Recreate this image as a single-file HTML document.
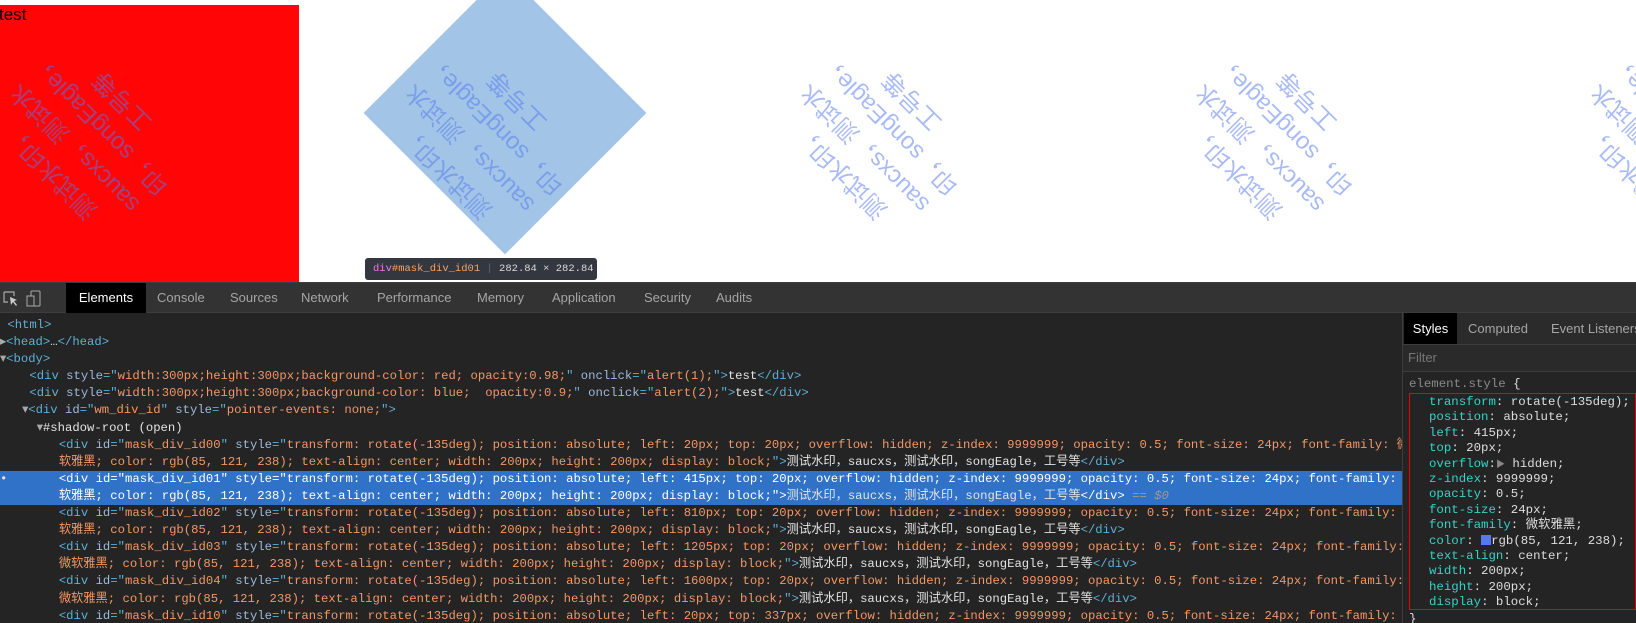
<!DOCTYPE html>
<html><head><meta charset="utf-8"><style>
*{margin:0;padding:0;box-sizing:border-box}
html,body{width:1636px;height:623px;overflow:hidden}
body{background:#fff;position:relative;font-family:"Liberation Sans","Noto Sans CJK SC",sans-serif}
.red{position:absolute;left:-1px;top:5px;width:300px;height:300px;background:#ff0505;font-size:17px;color:#000;line-height:20px}
.hl{position:absolute;left:405px;top:13px;width:200px;height:200px;background:#a1c4e7;transform:rotate(-135deg)}
.wm{position:absolute;top:13px;width:200px;height:200px;transform:rotate(-135deg);overflow:hidden;opacity:.5;font-size:24px;color:rgb(85,121,238);text-align:center;font-family:"Liberation Sans","Noto Sans CJK SC",sans-serif;line-height:1.4}
.tip{position:absolute;left:365px;top:258px;height:22px;width:232px;background:#333740;border-radius:3px;color:#d9d9d9;font:10.5px "Liberation Mono","Noto Sans CJK SC",monospace;line-height:22px;padding-left:8px;white-space:pre;overflow:hidden}
.tip:before{content:"";position:absolute;left:12px;top:-8px;border:8px solid transparent;border-top:0;border-bottom:8px solid #333740}
.dt{position:absolute;left:0;top:282px;width:1636px;height:341px;background:#242424;border-top:1px solid #3d3d3d;overflow:hidden}
.tabs{position:absolute;left:0;top:0;width:1636px;height:30px;background:#333;border-bottom:1px solid #3d3d3d;font-size:13px;color:#a5a5a5}
.tabs span{position:absolute;top:0;line-height:30px}
.code{position:absolute;left:0;top:34px;width:1402px;height:310px;overflow:hidden;font:12.25px "Liberation Mono","Noto Sans CJK SC",monospace;color:#dcdcdc}
.l{height:17.1px;line-height:17.1px;white-space:pre;overflow:hidden}
.t{color:#5db0d7}.a{color:#9bbbdc}.v{color:#f29766}.w{color:#e3e3e3}
.sel{background:#2f72c7}
.sel .t,.sel .a,.sel .v{color:#fff}
.side{position:absolute;left:1402px;top:30px;width:234px;height:311px;background:#242424;border-left:1px solid #3d3d3d}
.st{height:32px;border-bottom:1px solid #3d3d3d;font-size:13px;color:#a5a5a5;position:relative;background:#2b2b2b}
.st span{position:absolute;top:0;line-height:31px}
.flt{height:27px;background:#2a2a2a;border-bottom:1px solid #3d3d3d;color:#777;font-size:13px;padding:5px 0 0 5px}
.css{font:12.4px "Liberation Mono","Noto Sans CJK SC",monospace;color:#dedede}
.css div{height:15.4px;line-height:15.4px;white-space:pre}
.p{color:#35d4c7}
</style></head><body>
<div class="red">test</div>
<div class="hl"></div>
<div class="wm" style="left:10px">测试水印，saucxs，测试水印，songEagle，工号等</div>
<div class="wm" style="left:405px">测试水印，saucxs，测试水印，songEagle，工号等</div>
<div class="wm" style="left:800px">测试水印，saucxs，测试水印，songEagle，工号等</div>
<div class="wm" style="left:1195px">测试水印，saucxs，测试水印，songEagle，工号等</div>
<div class="wm" style="left:1590px">测试水印，saucxs，测试水印，songEagle，工号等</div>
<div class="tip"><span style="color:#ee78e6">div</span><span style="color:#f3a56a">#mask_div_id01</span> <span style="color:#666">|</span> 282.84 × 282.84</div>

<div class="dt">
<div class="tabs">
<svg style="position:absolute;left:3px;top:7px" width="40" height="17" viewBox="0 0 40 17"><path d="M1 2h10v4M1 2v10h4" stroke="#aaa" fill="none" stroke-width="1.2"/><path d="M7 7l7 3-3 1 3 4-1 1-3-4-2 3z" fill="#ccc"/><rect x="28" y="1" width="9" height="15" rx="1" stroke="#aaa" fill="none"/><rect x="24" y="6" width="7" height="10" stroke="#aaa" fill="#333"/></svg>
<span style="left:66px;width:80px;background:#000;color:#fff;text-align:center">Elements</span>
<span style="left:157px">Console</span><span style="left:230px">Sources</span><span style="left:301px">Network</span><span style="left:377px">Performance</span><span style="left:477px">Memory</span><span style="left:552px">Application</span><span style="left:644px">Security</span><span style="left:716px">Audits</span>
</div>
<div class="code"><div class="l"> <span class="t">&lt;html&gt;</span></div><div class="l"><span style="color:#aaa">▸</span><span class="t">&lt;head&gt;</span>…<span class="t">&lt;/head&gt;</span></div><div class="l"><span style="color:#aaa">▾</span><span class="t">&lt;body&gt;</span></div><div class="l">    <span class="t">&lt;div </span><span class="a">style</span><span class="t">="</span><span class="v">width:300px;height:300px;background-color: red; opacity:0.98;</span><span class="t">" </span><span class="a">onclick</span><span class="t">="</span><span class="v">alert(1);</span><span class="t">"&gt;</span><span class="w">test</span><span class="t">&lt;/div&gt;</span></div><div class="l">    <span class="t">&lt;div </span><span class="a">style</span><span class="t">="</span><span class="v">width:300px;height:300px;background-color: blue;  opacity:0.9;</span><span class="t">" </span><span class="a">onclick</span><span class="t">="</span><span class="v">alert(2);</span><span class="t">"&gt;</span><span class="w">test</span><span class="t">&lt;/div&gt;</span></div><div class="l">   <span style="color:#aaa">▾</span><span class="t">&lt;div </span><span class="a">id</span><span class="t">="</span><span class="v">wm_div_id</span><span class="t">" </span><span class="a">style</span><span class="t">="</span><span class="v">pointer-events: none;</span><span class="t">"&gt;</span></div><div class="l">     <span style="color:#aaa">▾</span><span class="w">#shadow-root (open)</span></div><div class="l">        <span class="t">&lt;div </span><span class="a">id</span><span class="t">="</span><span class="v">mask_div_id00</span><span class="t">" </span><span class="a">style</span><span class="t">="</span><span class="v">transform: rotate(-135deg); position: absolute; left: 20px; top: 20px; overflow: hidden; z-index: 9999999; opacity: 0.5; font-size: 24px; font-family: 微</span></div><div class="l">        <span class="v">软雅黑; color: rgb(85, 121, 238); text-align: center; width: 200px; height: 200px; display: block;</span><span class="t">"&gt;</span><span class="w">测试水印，saucxs，测试水印，songEagle，工号等</span><span class="t">&lt;/div&gt;</span></div><div class="l sel"><span class="w">•</span>       <span class="t">&lt;div </span><span class="a">id</span><span class="t">="</span><span class="v">mask_div_id01</span><span class="t">" </span><span class="a">style</span><span class="t">="</span><span class="v">transform: rotate(-135deg); position: absolute; left: 415px; top: 20px; overflow: hidden; z-index: 9999999; opacity: 0.5; font-size: 24px; font-family: 微</span></div><div class="l sel">        <span class="v">软雅黑; color: rgb(85, 121, 238); text-align: center; width: 200px; height: 200px; display: block;</span><span class="t">"&gt;</span><span class="w">测试水印，saucxs，测试水印，songEagle，工号等</span><span class="t">&lt;/div&gt;</span><span style="color:#9a9a9a;font-style:italic"> == $0</span></div><div class="l">        <span class="t">&lt;div </span><span class="a">id</span><span class="t">="</span><span class="v">mask_div_id02</span><span class="t">" </span><span class="a">style</span><span class="t">="</span><span class="v">transform: rotate(-135deg); position: absolute; left: 810px; top: 20px; overflow: hidden; z-index: 9999999; opacity: 0.5; font-size: 24px; font-family: 微</span></div><div class="l">        <span class="v">软雅黑; color: rgb(85, 121, 238); text-align: center; width: 200px; height: 200px; display: block;</span><span class="t">"&gt;</span><span class="w">测试水印，saucxs，测试水印，songEagle，工号等</span><span class="t">&lt;/div&gt;</span></div><div class="l">        <span class="t">&lt;div </span><span class="a">id</span><span class="t">="</span><span class="v">mask_div_id03</span><span class="t">" </span><span class="a">style</span><span class="t">="</span><span class="v">transform: rotate(-135deg); position: absolute; left: 1205px; top: 20px; overflow: hidden; z-index: 9999999; opacity: 0.5; font-size: 24px; font-family:</span></div><div class="l">        <span class="v">微软雅黑; color: rgb(85, 121, 238); text-align: center; width: 200px; height: 200px; display: block;</span><span class="t">"&gt;</span><span class="w">测试水印，saucxs，测试水印，songEagle，工号等</span><span class="t">&lt;/div&gt;</span></div><div class="l">        <span class="t">&lt;div </span><span class="a">id</span><span class="t">="</span><span class="v">mask_div_id04</span><span class="t">" </span><span class="a">style</span><span class="t">="</span><span class="v">transform: rotate(-135deg); position: absolute; left: 1600px; top: 20px; overflow: hidden; z-index: 9999999; opacity: 0.5; font-size: 24px; font-family:</span></div><div class="l">        <span class="v">微软雅黑; color: rgb(85, 121, 238); text-align: center; width: 200px; height: 200px; display: block;</span><span class="t">"&gt;</span><span class="w">测试水印，saucxs，测试水印，songEagle，工号等</span><span class="t">&lt;/div&gt;</span></div><div class="l">        <span class="t">&lt;div </span><span class="a">id</span><span class="t">="</span><span class="v">mask_div_id10</span><span class="t">" </span><span class="a">style</span><span class="t">="</span><span class="v">transform: rotate(-135deg); position: absolute; left: 20px; top: 337px; overflow: hidden; z-index: 9999999; opacity: 0.5; font-size: 24px; font-family: 微</span></div></div>
<div class="side">
<div class="st"><span style="left:1px;width:53px;height:31px;background:#000;color:#fff;text-align:center">Styles</span><span style="left:65px">Computed</span><span style="left:148px;white-space:nowrap">Event Listeners</span></div>
<div class="flt">Filter</div>
<div class="css" style="position:absolute;left:6px;top:63px;line-height:16.7px;color:#8a8a8a;white-space:pre">element.style <span style="color:#ddd">{</span></div>
<div style="position:absolute;left:6px;top:80px;width:227px;height:217px;border:1px solid #e00"></div>
<div class="css" style="position:absolute;left:26px;top:82px"><div><span class="p">transform</span>: rotate(-135deg);</div><div><span class="p">position</span>: absolute;</div><div><span class="p">left</span>: 415px;</div><div><span class="p">top</span>: 20px;</div><div><span class="p">overflow</span>:<span style="color:#888;font-size:9px">▶</span> hidden;</div><div><span class="p">z-index</span>: 9999999;</div><div><span class="p">opacity</span>: 0.5;</div><div><span class="p">font-size</span>: 24px;</div><div><span class="p">font-family</span>: 微软雅黑;</div><div><span class="p">color</span>: <span style="display:inline-block;width:10px;height:10px;background:rgb(85,121,238);vertical-align:-1px"></span>rgb(85, 121, 238);</div><div><span class="p">text-align</span>: center;</div><div><span class="p">width</span>: 200px;</div><div><span class="p">height</span>: 200px;</div><div><span class="p">display</span>: block;</div></div>
<div class="css" style="position:absolute;left:6px;top:298px;line-height:16px">}</div>
</div>
</div>
</body></html>
